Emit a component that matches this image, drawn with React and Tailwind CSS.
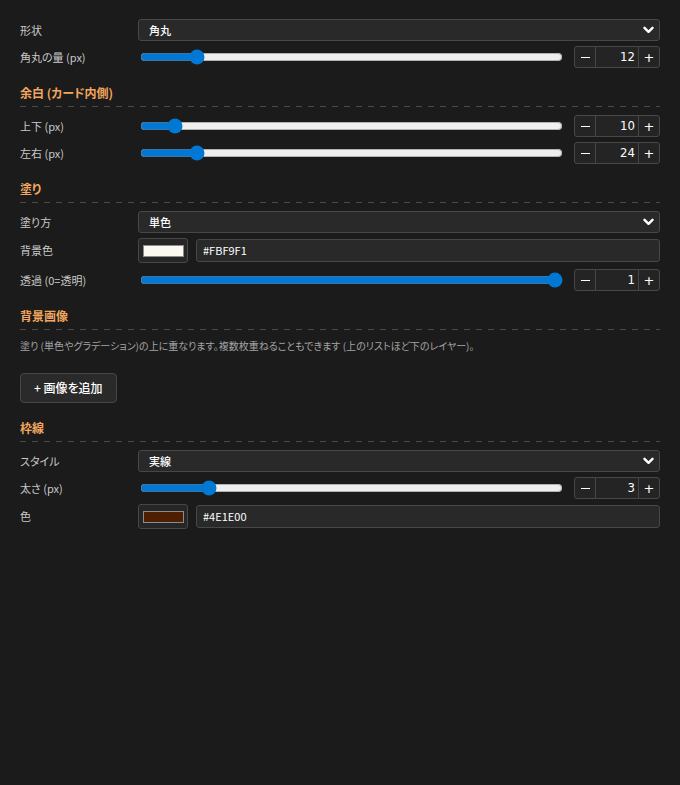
import React from "react";

const FONT =
  "font-['Noto_Sans_CJK_JP','Noto_Sans',sans-serif] [font-feature-settings:'palt']";

function Chevron() {
  return (
    <svg width="11" height="8" viewBox="0 0 11 8" className="shrink-0">
      <path d="M1.5 1.8 L5.5 5.8 L9.5 1.8" fill="none" stroke="#ffffff" strokeWidth="2.4" strokeLinecap="round" strokeLinejoin="round" />
    </svg>
  );
}

function Row({ label, children, className = "" }) {
  return (
    <div className={`flex items-center ${className}`}>
      <div className="w-[118px] shrink-0 text-[11px] text-[#c9c9c9]">{label}</div>
      <div className="flex min-w-0 flex-1 items-center">{children}</div>
    </div>
  );
}

function Select({ value }) {
  return (
    <div className="flex h-[22px] flex-1 items-center justify-between rounded-[3px] border border-[#474747] bg-[#292929] pl-[10px] pr-[5px]">
      <span className="text-[11px] font-medium text-white">{value}</span>
      <Chevron />
    </div>
  );
}

function Stepper({ value }) {
  return (
    <div className="flex h-[22px] w-[86px] shrink-0 items-stretch rounded-[3px] border border-[#474747] bg-[#242424] text-white">
      <div className="flex w-[21px] items-center justify-center border-r border-[#474747]">
        <span className="block h-px w-[9px] bg-white" />
      </div>
      <div className="flex flex-1 items-center justify-end pr-[3px] font-['DejaVu_Sans_Condensed','DejaVu_Sans',sans-serif] text-[13px] [font-stretch:condensed]">
        {value}
      </div>
      <div className="flex w-[21px] items-center justify-center border-l border-[#474747] font-['DejaVu_Sans',sans-serif] text-[13px] leading-none">
        +
      </div>
    </div>
  );
}

function SliderRow({ label, value, min = 0, max, step = 1, className = "" }) {
  return (
    <Row label={label} className={`h-[22px] ${className}`}>
      <input
        type="range"
        min={min}
        max={max}
        step={step}
        defaultValue={value}
        className="m-0 ml-[2px] mr-[11px] min-w-0 flex-1 accent-[#0078d4]"
      />
      <Stepper value={value} />
    </Row>
  );
}

function ColorRow({ label, color, className = "" }) {
  return (
    <Row label={label} className={`h-[25px] ${className}`}>
      <div className="flex h-[25px] w-[50px] shrink-0 items-center justify-center rounded-[3px] border border-[#474747] bg-[#262626]">
        <div className="h-[12px] w-[41px] border border-[#8c8c8c]" style={{ backgroundColor: color }} />
      </div>
      <div className="ml-[8px] flex h-[23px] flex-1 items-center rounded-[3px] border border-[#474747] bg-[#292929] pl-[6px] text-[11px] text-white">
        {color}
      </div>
    </Row>
  );
}

function Section({ title }) {
  return (
    <div className="mb-[8px] mt-4">
      <div className="pb-[4px] text-[12px] font-bold leading-[18px] text-[#f2a65e]">{title}</div>
      <div className="h-px bg-[linear-gradient(to_right,#4a4a4a_0,#4a4a4a_6px,transparent_6px,transparent_12px)] bg-[length:12px_1px] bg-repeat-x" />
    </div>
  );
}

export default function App() {
  return (
    <div className={`min-h-[785px] bg-[#1b1b1b] px-5 pt-[19px] ${FONT}`}>
      <Row label="形状" className="h-[22px]">
        <Select value="角丸" />
      </Row>
      <SliderRow label="角丸の量 (px)" value={12} max={100} className="mt-[5px]" />

      <Section title="余白 (カード内側)" />
      <SliderRow label="上下 (px)" value={10} max={150} />
      <SliderRow label="左右 (px)" value={24} max={200} className="mt-[5px]" />

      <Section title="塗り" />
      <Row label="塗り方" className="h-[22px]">
        <Select value="単色" />
      </Row>
      <ColorRow label="背景色" color="#FBF9F1" className="mt-[5px]" />
      <SliderRow label="透過 (0=透明)" value={1} max={1} step={0.01} className="mt-[6px]" />

      <Section title="背景画像" />
      <p className="text-[10px] leading-[16px] text-[#a3a3a3]">
        塗り (単色やグラデーション)の上に重なります。複数枚重ねることもできます (上のリストほど下のレイヤー)。
      </p>
      <button className="mt-[19px] flex h-[30px] items-center rounded-[4px] border border-[#474747] bg-[#2a2a2a] px-[13px] text-[12px] font-medium text-white">
        + 画像を追加
      </button>

      <Section title="枠線" />
      <Row label="スタイル" className="h-[22px]">
        <Select value="実線" />
      </Row>
      <SliderRow label="太さ (px)" value={3} max={20} className="mt-[5px]" />
      <ColorRow label="色" color="#4E1E00" className="mt-[5px]" />
    </div>
  );
}
